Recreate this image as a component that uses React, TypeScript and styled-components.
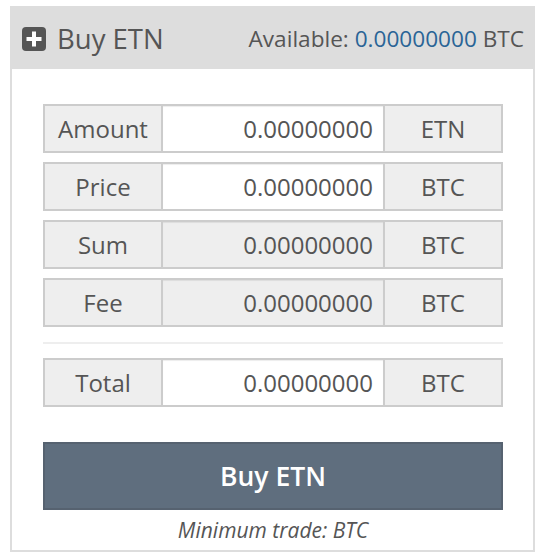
import styled, { createGlobalStyle } from 'styled-components';

const GlobalStyle = createGlobalStyle`
  html, body {
    margin: 0;
    padding: 0;
    background: #ffffff;
    font-family: 'Open Sans', 'Liberation Sans', sans-serif;
    color: #555555;
  }
  * {
    box-sizing: border-box;
  }
`;

interface Field {
  label: string;
  value: string;
  unit: string;
  disabled?: boolean;
}

const fields: Field[] = [
  { label: 'Amount', value: '0.00000000', unit: 'ETN' },
  { label: 'Price', value: '0.00000000', unit: 'BTC' },
  { label: 'Sum', value: '0.00000000', unit: 'BTC', disabled: true },
  { label: 'Fee', value: '0.00000000', unit: 'BTC', disabled: true },
];

const total: Field = { label: 'Total', value: '0.00000000', unit: 'BTC' };

const Panel = styled.div`
  width: 525px;
  margin: 6px 0 0 10px;
  border: 2px solid #dddddd;
  background: #ffffff;
`;

const Header = styled.div`
  display: flex;
  align-items: center;
  justify-content: space-between;
  height: 61px;
  padding: 0 9px 0 10px;
  background: #dddddd;
`;

const Title = styled.h3`
  display: flex;
  align-items: center;
  gap: 11px;
  margin: 0;
  font-size: 27.5px;
  font-weight: 400;
  color: #555555;
`;

const Available = styled.div`
  font-size: 22.6px;
  color: #555555;
`;

const Balance = styled.span`
  color: #2a6496;
`;

const Body = styled.div`
  padding: 35px 30px 5px 31px;
`;

const InputGroup = styled.div`
  display: flex;
  height: 49px;
  margin-bottom: 9px;
`;

const Addon = styled.span`
  display: flex;
  align-items: center;
  justify-content: center;
  width: 120px;
  flex: none;
  border: 2px solid #cccccc;
  background: #eeeeee;
  font-size: 24px;
  color: #555555;
`;

const Input = styled.input<{ $disabled?: boolean }>`
  flex: 1;
  min-width: 0;
  height: 100%;
  padding: 0 10px;
  border: 2px solid #cccccc;
  border-left: none;
  border-right: none;
  background: ${(p) => (p.$disabled ? '#eeeeee' : '#ffffff')};
  box-shadow: inset 0 1px 1px rgba(0, 0, 0, 0.075);
  font-family: 'Open Sans', 'Liberation Sans', sans-serif;
  font-size: 24px;
  color: #555555;
  text-align: right;
  outline: none;
`;

const Divider = styled.hr`
  margin: 15px 0 14px;
  border: none;
  border-top: 2px solid #eeeeee;
`;

const BuyButton = styled.button`
  display: block;
  width: 100%;
  height: 68px;
  margin-top: 35px;
  border: 2px solid #566270;
  background: #5f6e7e;
  color: #ffffff;
  font-family: 'Open Sans', 'Liberation Sans', sans-serif;
  font-size: 26.5px;
  font-weight: 600;
  cursor: pointer;
`;

const Note = styled.p`
  margin: 5px 0 0;
  text-align: center;
  font-size: 21px;
  line-height: 30px;
  font-style: italic;
  color: #555555;
`;

function PlusSquare() {
  return (
    <svg width="24" height="24" viewBox="0 0 24 24" aria-hidden="true">
      <rect x="0" y="0" width="24" height="24" rx="4" fill="#555555" />
      <rect x="10" y="4.5" width="4" height="15" fill="#ffffff" />
      <rect x="4.5" y="10" width="15" height="4" fill="#ffffff" />
    </svg>
  );
}

function FieldRow({ label, value, unit, disabled }: Field) {
  return (
    <InputGroup>
      <Addon>{label}</Addon>
      <Input type="text" readOnly value={value} $disabled={disabled} />
      <Addon>{unit}</Addon>
    </InputGroup>
  );
}

export default function App() {
  return (
    <>
      <GlobalStyle />
      <Panel>
        <Header>
          <Title>
            <PlusSquare />
            Buy ETN
          </Title>
          <Available>
            Available: <Balance>0.00000000</Balance> BTC
          </Available>
        </Header>
        <Body>
          {fields.map((f) => (
            <FieldRow key={f.label} {...f} />
          ))}
          <Divider />
          <FieldRow {...total} />
          <BuyButton type="button">Buy ETN</BuyButton>
          <Note>Minimum trade: BTC</Note>
        </Body>
      </Panel>
    </>
  );
}
